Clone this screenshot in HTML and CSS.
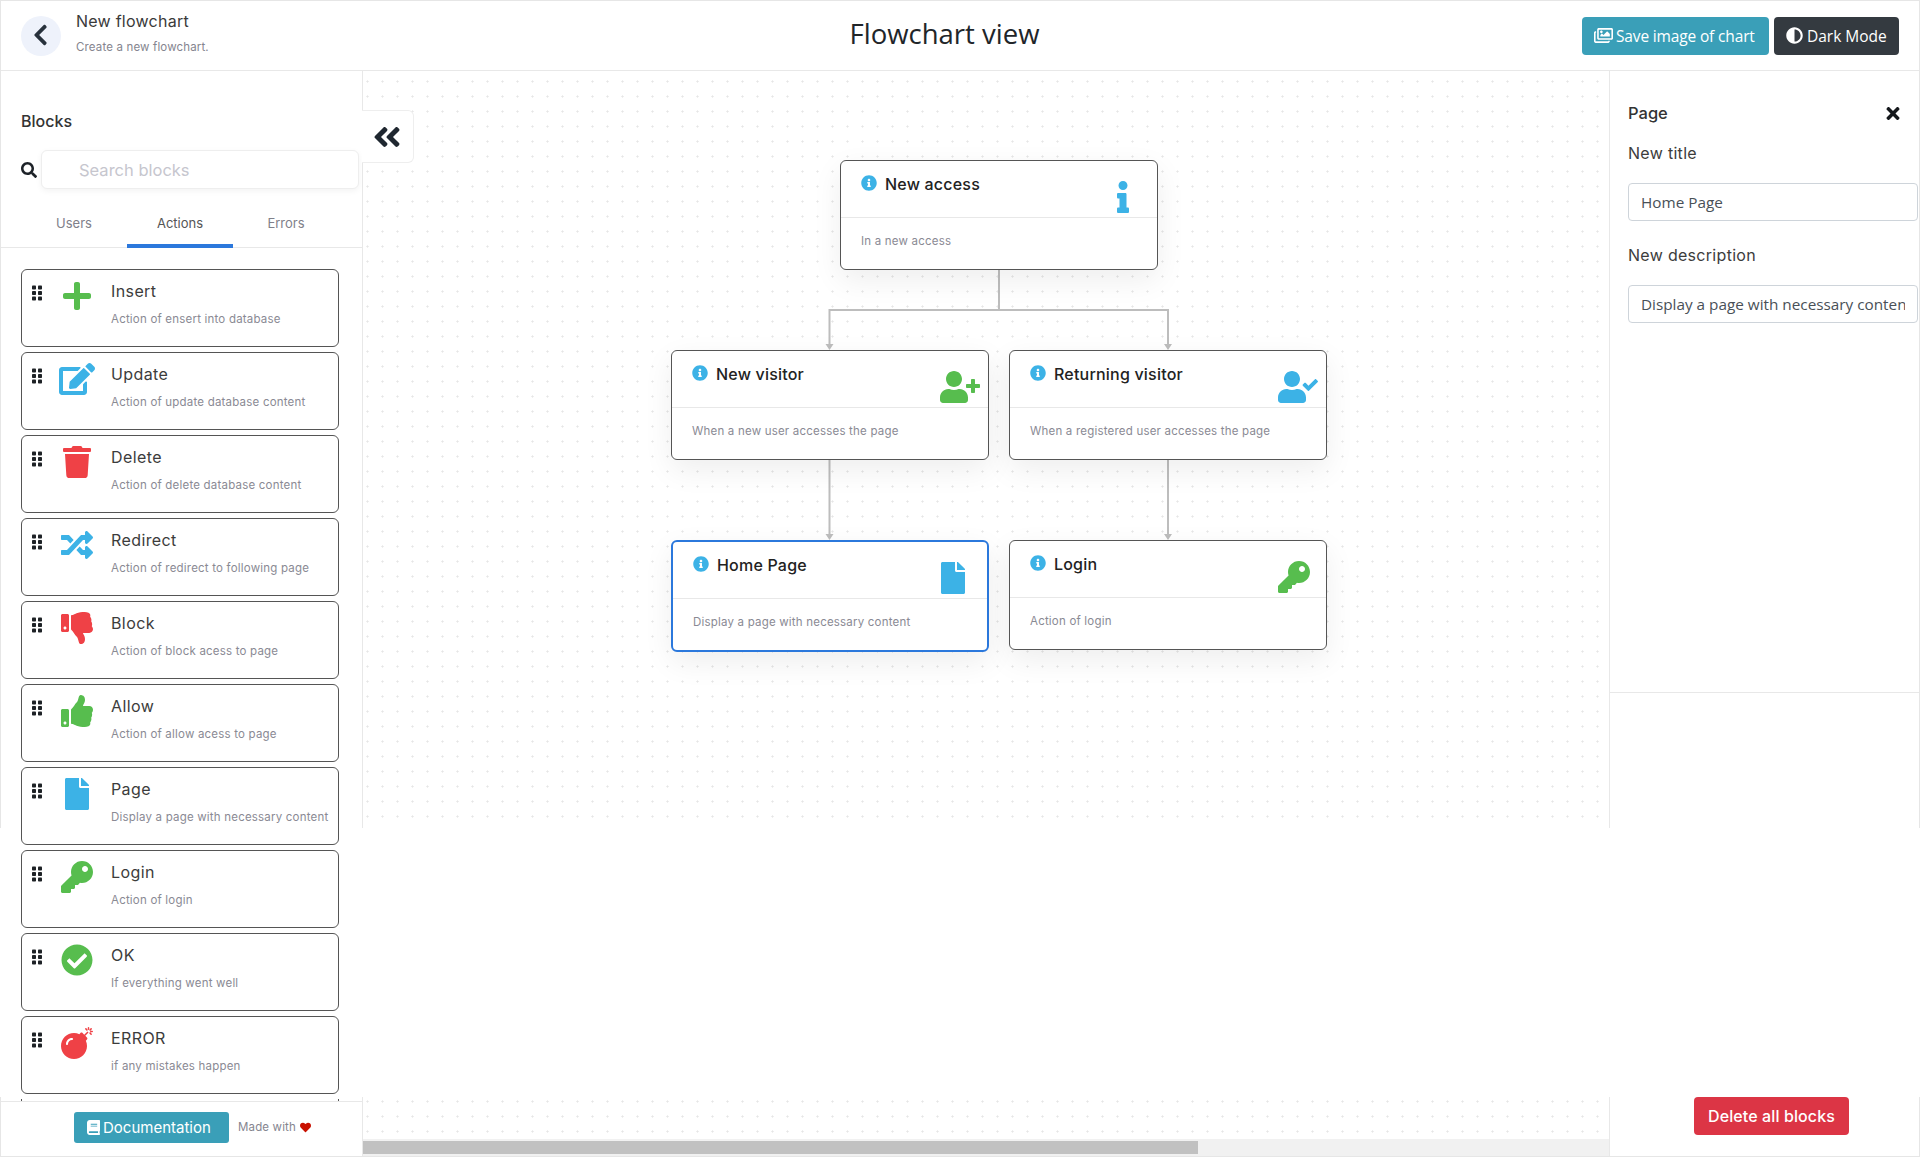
FILE: index.html
```html
<!DOCTYPE html>
<html lang="en">
<head>
<meta charset="utf-8">
<title>Flowchart view</title>
<link rel="stylesheet" href="styles.css">
</head>
<body>
<svg class="sprites" xmlns="http://www.w3.org/2000/svg">
<symbol id="i-plus" viewBox="0 0 448 512"><path d="M416 208H272V64c0-17.67-14.33-32-32-32h-32c-17.67 0-32 14.33-32 32v144H32c-17.67 0-32 14.33-32 32v32c0 17.67 14.33 32 32 32h144v144c0 17.67 14.33 32 32 32h32c17.67 0 32-14.33 32-32V304h144c17.67 0 32-14.33 32-32v-32c0-17.67-14.33-32-32-32z"/></symbol>
<symbol id="i-edit" viewBox="0 0 576 512"><path d="M402.6 83.2l90.2 90.2c3.8 3.8 3.8 10 0 13.8L274.4 405.6l-92.8 10.3c-12.4 1.4-22.9-9.1-21.5-21.5l10.3-92.8L388.8 83.2c3.8-3.8 10-3.8 13.8 0zm162-22.9l-48.8-48.8c-15.2-15.2-39.9-15.2-55.2 0l-35.4 35.4c-3.8 3.8-3.8 10 0 13.8l90.2 90.2c3.8 3.8 10 3.8 13.8 0l35.4-35.4c15.2-15.3 15.2-40 0-55.2zM384 346.2V448H64V128h229.8c3.2 0 6.2-1.3 8.5-3.5l40-40c7.6-7.6 2.2-20.5-8.5-20.5H48C21.5 64 0 85.5 0 112v352c0 26.5 21.5 48 48 48h352c26.5 0 48-21.5 48-48V306.2c0-10.7-12.9-16-20.5-8.5l-40 40c-2.2 2.3-3.5 5.3-3.5 8.5z"/></symbol>
<symbol id="i-trash" viewBox="0 0 448 512"><path d="M432 32H312l-9.4-18.7A24 24 0 0 0 281.1 0H166.8a23.72 23.72 0 0 0-21.4 13.3L136 32H16A16 16 0 0 0 0 48v32a16 16 0 0 0 16 16h416a16 16 0 0 0 16-16V48a16 16 0 0 0-16-16zM53.2 467a48 48 0 0 0 47.9 45h245.8a48 48 0 0 0 47.9-45L416 128H32z"/></symbol>
<symbol id="i-random" viewBox="0 0 512 512"><path d="M504.971 359.029c9.373 9.373 9.373 24.569 0 33.941l-80 79.984c-15.01 15.01-40.971 4.49-40.971-16.971V416h-58.785a12.004 12.004 0 0 1-8.773-3.812l-70.556-75.596 53.333-57.143L352 336h32v-39.981c0-21.438 25.943-31.998 40.971-16.971l80 79.981zM12 176h84l52.781 56.551 53.333-57.143-70.556-75.596A11.999 11.999 0 0 0 122.785 96H12c-6.627 0-12 5.373-12 12v56c0 6.627 5.373 12 12 12zm372 0v39.984c0 21.46 25.961 31.98 40.971 16.971l80-79.984c9.373-9.373 9.373-24.569 0-33.941l-80-79.981C409.943 24.021 384 34.582 384 56.019V96h-58.785a12.004 12.004 0 0 0-8.773 3.812L96 336H12c-6.627 0-12 5.373-12 12v56c0 6.627 5.373 12 12 12h110.785c3.326 0 6.503-1.381 8.773-3.812L352 176h32z"/></symbol>
<symbol id="i-down" viewBox="0 0 512 512"><path d="M0 56v240c0 13.255 10.745 24 24 24h80c13.255 0 24-10.745 24-24V56c0-13.255-10.745-24-24-24H24C10.745 32 0 42.745 0 56zm40 200c0-13.255 10.745-24 24-24s24 10.745 24 24-10.745 24-24 24-24-10.745-24-24zm272 256c-20.183 0-29.485-39.293-33.931-57.795-5.206-21.666-10.589-44.07-25.393-58.902-32.469-32.524-49.503-73.967-89.117-113.111a11.98 11.98 0 0 1-3.558-8.521V59.901c0-6.541 5.243-11.878 11.783-11.998 15.831-.29 36.694-9.079 52.651-16.178C256.189 17.598 295.709.017 343.995 0h2.844c42.777 0 93.363.413 113.774 29.737 8.392 12.057 10.446 27.034 6.148 44.632 16.312 17.053 25.063 48.863 16.382 74.757 17.544 23.432 19.143 56.132 9.308 79.469l.11.11c11.893 11.949 19.523 31.259 19.439 49.197-.156 30.352-26.157 58.098-59.553 58.098H350.723C358.03 364.34 384 388.132 384 430.548 384 504 336 512 312 512z"/></symbol>
<symbol id="i-up" viewBox="0 0 512 512"><path d="M104 224H24c-13.255 0-24 10.745-24 24v240c0 13.255 10.745 24 24 24h80c13.255 0 24-10.745 24-24V248c0-13.255-10.745-24-24-24zM64 472c-13.255 0-24-10.745-24-24s10.745-24 24-24 24 10.745 24 24-10.745 24-24 24zM384 81.452c0 42.416-25.97 66.208-33.277 94.548h101.723c33.397 0 59.397 27.746 59.553 58.098.084 17.938-7.546 37.249-19.439 49.197l-.11.11c9.836 23.337 8.237 56.037-9.308 79.469 8.681 25.895-.069 57.704-16.382 74.757 4.298 17.598 2.244 32.575-6.148 44.632C440.202 511.587 389.616 512 346.839 512l-2.845-.001c-48.287-.017-87.806-17.598-119.56-31.725-15.957-7.099-36.821-15.887-52.651-16.178-6.54-.12-11.783-5.457-11.783-11.998v-213.77c0-3.2 1.282-6.271 3.558-8.521 39.614-39.144 56.648-80.587 89.117-113.111 14.804-14.832 20.188-37.236 25.393-58.902C282.515 39.293 291.817 0 312 0c24 0 72 8 72 81.452z"/></symbol>
<symbol id="i-file" viewBox="0 0 384 512"><path d="M224 136V0H24C10.7 0 0 10.7 0 24v464c0 13.3 10.7 24 24 24h336c13.3 0 24-10.7 24-24V160H248c-13.2 0-24-10.8-24-24zm160-14.1v6.1H256V0h6.1c6.4 0 12.5 2.5 17 7l97.9 98c4.5 4.5 7 10.6 7 16.9z"/></symbol>
<symbol id="i-key" viewBox="0 0 512 512"><path d="M512 176.001C512 273.203 433.202 352 336 352c-11.22 0-22.19-1.062-32.827-3.069l-24.012 27.014A23.999 23.999 0 0 1 261.223 384H224v40c0 13.255-10.745 24-24 24h-40v40c0 13.255-10.745 24-24 24H24c-13.255 0-24-10.745-24-24v-78.059c0-6.365 2.529-12.47 7.029-16.971l161.802-161.802C163.108 213.814 160 195.271 160 176 160 78.798 238.797.001 335.999 0 433.488-.001 512 78.511 512 176.001zM336 128c0 26.51 21.49 48 48 48s48-21.49 48-48-21.49-48-48-48-48 21.49-48 48z"/></symbol>
<symbol id="i-check" viewBox="0 0 512 512"><path d="M504 256c0 136.967-111.033 248-248 248S8 392.967 8 256 119.033 8 256 8s248 111.033 248 248zM227.314 387.314l184-184c6.248-6.248 6.248-16.379 0-22.627l-22.627-22.627c-6.248-6.249-16.379-6.249-22.628 0L216 308.118l-70.059-70.059c-6.248-6.248-16.379-6.248-22.628 0l-22.627 22.627c-6.248 6.248-6.248 16.379 0 22.627l104 104c6.249 6.249 16.379 6.249 22.628.001z"/></symbol>
<symbol id="i-bomb" viewBox="0 0 512 512"><path d="M440.5 88.5l-52 52L415 167c9.4 9.4 9.4 24.6 0 33.9l-17.4 17.4c11.8 26.1 18.4 55.1 18.4 85.6 0 114.9-93.1 208-208 208S0 418.9 0 304 93.1 96 208 96c30.5 0 59.5 6.6 85.6 18.4L311 97c9.4-9.4 24.6-9.4 33.9 0l26.5 26.5 52-52 17.1 17zM500 60h-24c-6.6 0-12 5.4-12 12s5.4 12 12 12h24c6.6 0 12-5.4 12-12s-5.4-12-12-12zM440 0c-6.6 0-12 5.4-12 12v24c0 6.6 5.4 12 12 12s12-5.4 12-12V12c0-6.6-5.4-12-12-12zm33.9 55l17-17c4.7-4.7 4.7-12.3 0-17-4.7-4.7-12.3-4.7-17 0l-17 17c-4.7 4.7-4.7 12.3 0 17 4.8 4.7 12.4 4.7 17 0zm-67.8 0c4.7 4.7 12.3 4.7 17 0 4.7-4.7 4.7-12.3 0-17l-17-17c-4.7-4.7-12.3-4.7-17 0-4.7 4.7-4.7 12.3 0 17l17 17zm67.8 34c-4.7-4.7-12.3-4.7-17 0-4.7 4.7-4.7 12.3 0 17l17 17c4.7 4.7 12.3 4.7 17 0 4.7-4.7 4.7-12.3 0-17l-17-17zM112 272c0-35.3 28.7-64 64-64 8.8 0 16-7.2 16-16s-7.2-16-16-16c-52.9 0-96 43.1-96 96 0 8.8 7.2 16 16 16s16-7.2 16-16z"/></symbol>
<symbol id="i-info" viewBox="0 0 192 512"><path d="M20 424.229h20V279.771H20c-11.046 0-20-8.954-20-20V212c0-11.046 8.954-20 20-20h112c11.046 0 20 8.954 20 20v212.229h20c11.046 0 20 8.954 20 20V492c0 11.046-8.954 20-20 20H20c-11.046 0-20-8.954-20-20v-47.771c0-11.046 8.954-20 20-20zM96 0C56.235 0 24 32.235 24 72s32.235 72 72 72 72-32.235 72-72S135.764 0 96 0z"/></symbol>
<symbol id="i-info-c" viewBox="0 0 512 512"><path d="M256 8C119.043 8 8 119.083 8 256c0 136.997 111.043 248 248 248s248-111.003 248-248C504 119.083 392.957 8 256 8zm0 110c23.196 0 42 18.804 42 42s-18.804 42-42 42-42-18.804-42-42 18.804-42 42-42zm56 254c0 6.627-5.373 12-12 12h-88c-6.627 0-12-5.373-12-12v-24c0-6.627 5.373-12 12-12h12v-64h-12c-6.627 0-12-5.373-12-12v-24c0-6.627 5.373-12 12-12h64c6.627 0 12 5.373 12 12v100h12c6.627 0 12 5.373 12 12v24z"/></symbol>
<symbol id="i-uplus" viewBox="0 0 640 512"><path d="M624 208h-64v-64c0-8.8-7.2-16-16-16h-32c-8.8 0-16 7.2-16 16v64h-64c-8.8 0-16 7.2-16 16v32c0 8.8 7.2 16 16 16h64v64c0 8.8 7.2 16 16 16h32c8.8 0 16-7.2 16-16v-64h64c8.8 0 16-7.2 16-16v-32c0-8.8-7.2-16-16-16zm-400 48c70.7 0 128-57.3 128-128S294.7 0 224 0 96 57.3 96 128s57.3 128 128 128zm89.6 32h-16.7c-22.2 10.2-46.9 16-72.9 16s-50.6-5.8-72.9-16h-16.7C60.2 288 0 348.2 0 422.4V464c0 26.5 21.5 48 48 48h352c26.5 0 48-21.5 48-48v-41.6c0-74.2-60.2-134.4-134.4-134.4z"/></symbol>
<symbol id="i-ucheck" viewBox="0 0 640 512"><path d="M224 256c70.7 0 128-57.3 128-128S294.7 0 224 0 96 57.3 96 128s57.3 128 128 128zm89.6 32h-16.7c-22.2 10.2-46.9 16-72.9 16s-50.6-5.8-72.9-16h-16.7C60.2 288 0 348.2 0 422.4V464c0 26.5 21.5 48 48 48h352c26.5 0 48-21.5 48-48v-41.6c0-74.2-60.2-134.4-134.4-134.4zm323-128.4l-27.8-28.1c-4.6-4.7-12.1-4.7-16.8-.1l-104.8 104-45.5-45.8c-4.6-4.7-12.1-4.7-16.8-.1l-28.1 27.9c-4.7 4.6-4.7 12.1-.1 16.8l81.7 82.3c4.6 4.7 12.1 4.7 16.8.1l141.3-140.2c4.6-4.7 4.7-12.2.1-16.8z"/></symbol>
<symbol id="i-back" viewBox="0 0 320 512"><path d="M34.52 239.03L228.87 44.69c9.37-9.37 24.57-9.37 33.94 0l22.67 22.67c9.36 9.36 9.37 24.52.04 33.9L131.49 256l154.02 154.75c9.34 9.38 9.32 24.54-.04 33.9l-22.67 22.67c-9.37 9.37-24.57 9.37-33.94 0L34.52 272.97c-9.37-9.37-9.37-24.57 0-33.94z"/></symbol>
<symbol id="i-dbl" viewBox="0 0 448 512"><path d="M223.7 239l136-136c9.4-9.4 24.6-9.4 33.9 0l22.6 22.6c9.4 9.4 9.4 24.6 0 33.9L319.9 256l96.4 96.4c9.4 9.4 9.4 24.6 0 33.9L393.7 409c-9.4 9.4-24.6 9.4-33.9 0l-136-136c-9.5-9.4-9.5-24.6-.1-34zm-192 34l136 136c9.4 9.4 24.6 9.4 33.9 0l22.6-22.6c9.4-9.4 9.4-24.6 0-33.9L127.9 256l96.4-96.4c9.4-9.4 9.4-24.6 0-33.9L201.7 103c-9.4-9.4-24.6-9.4-33.9 0l-136 136c-9.5 9.4-9.5 24.6-.1 34z"/></symbol>
<symbol id="i-search" viewBox="0 0 512 512"><path d="M505 442.7L405.3 343c-4.5-4.5-10.6-7-17-7H372c27.6-35.3 44-79.7 44-128C416 93.1 322.9 0 208 0S0 93.1 0 208s93.1 208 208 208c48.3 0 92.7-16.4 128-44v16.3c0 6.4 2.5 12.5 7 17l99.7 99.7c9.4 9.4 24.6 9.4 33.9 0l28.3-28.3c9.4-9.4 9.4-24.6.1-34zM208 336c-70.7 0-128-57.2-128-128 0-70.7 57.2-128 128-128 70.7 0 128 57.2 128 128 0 70.7-57.2 128-128 128z"/></symbol>
<symbol id="i-times" viewBox="0 0 352 512"><path d="M242.72 256l100.07-100.07c12.28-12.28 12.28-32.19 0-44.48l-22.24-22.24c-12.28-12.28-32.19-12.28-44.48 0L176 189.28 75.93 89.21c-12.28-12.28-32.19-12.28-44.48 0L9.21 111.45c-12.28 12.28-12.28 32.19 0 44.48L109.28 256 9.21 356.07c-12.28 12.28-12.28 32.19 0 44.48l22.24 22.24c12.28 12.28 32.2 12.28 44.48 0L176 322.72l100.07 100.07c12.28 12.28 32.2 12.28 44.48 0l22.24-22.24c12.28-12.28 12.28-32.19 0-44.48L242.72 256z"/></symbol>
<symbol id="i-images" viewBox="0 0 576 512"><path d="M480 416v16c0 26.51-21.49 48-48 48H48c-26.51 0-48-21.49-48-48V176c0-26.51 21.49-48 48-48h16v48H54a6 6 0 0 0-6 6v244a6 6 0 0 0 6 6h372a6 6 0 0 0 6-6v-10h48zm42-336H150a6 6 0 0 0-6 6v244a6 6 0 0 0 6 6h372a6 6 0 0 0 6-6V86a6 6 0 0 0-6-6zm6-48c26.51 0 48 21.49 48 48v256c0 26.51-21.49 48-48 48H144c-26.51 0-48-21.49-48-48V80c0-26.51 21.49-48 48-48h384zM264 144c0 22.091-17.909 40-40 40s-40-17.909-40-40 17.909-40 40-40 40 17.909 40 40zm-72 96l39.515-39.515c4.686-4.686 12.284-4.686 16.971 0L288 240l103.515-103.515c4.686-4.686 12.284-4.686 16.971 0L480 208v80H192v-48z"/></symbol>
<symbol id="i-adjust" viewBox="0 0 512 512"><path d="M8 256c0 136.966 111.033 248 248 248s248-111.034 248-248S392.966 8 256 8 8 119.033 8 256zm248 184V72c101.705 0 184 82.311 184 184 0 101.705-82.311 184-184 184z"/></symbol>
<symbol id="i-book" viewBox="0 0 448 512"><path d="M448 360V24c0-13.3-10.7-24-24-24H96C43 0 0 43 0 96v320c0 53 43 96 96 96h328c13.3 0 24-10.7 24-24v-16c0-7.5-3.5-14.3-8.9-18.7-4.2-15.4-4.2-59.3 0-74.7 5.4-4.3 8.9-11.1 8.9-18.6zM128 134c0-3.3 2.7-6 6-6h212c3.3 0 6 2.7 6 6v20c0 3.3-2.7 6-6 6H134c-3.3 0-6-2.7-6-6v-20zm0 64c0-3.3 2.7-6 6-6h212c3.3 0 6 2.7 6 6v20c0 3.3-2.7 6-6 6H134c-3.3 0-6-2.7-6-6v-20zm253.4 250H96c-17.7 0-32-14.3-32-32 0-17.6 14.4-32 32-32h285.4c-1.9 17.1-1.9 46.9 0 64z"/></symbol>
<symbol id="i-heart" viewBox="0 0 512 512"><path d="M462.3 62.6C407.5 15.9 326 24.3 275.7 76.2L256 96.5l-19.7-20.3C186.1 24.3 104.5 15.9 49.7 62.6c-62.8 53.6-66.1 149.8-9.9 207.9l193.5 199.8c12.5 12.9 32.8 12.9 45.3 0l193.5-199.8c56.3-58.1 53-154.3-9.8-207.9z"/></symbol>
<symbol id="i-grip" viewBox="0 0 10 15"><rect width="4" height="4" rx=".8"/><rect x="6" width="4" height="4" rx=".8"/><rect y="5.5" width="4" height="4" rx=".8"/><rect x="6" y="5.5" width="4" height="4" rx=".8"/><rect y="11" width="4" height="4" rx=".8"/><rect x="6" y="11" width="4" height="4" rx=".8"/></symbol>
</svg>

<div class="app">
  <header class="topbar">
    <div class="brand">
      <a class="back"><svg class="ic-back"><use href="#i-back"/></svg></a>
      <div class="brand-text">
        <div class="brand-title">New flowchart</div>
        <div class="brand-sub">Create a new flowchart.</div>
      </div>
    </div>
    <h1 class="view-title">Flowchart view</h1>
    <div class="actions">
      <button class="btn btn-info"><svg class="ic-btn-w"><use href="#i-images"/></svg>Save image of chart</button>
      <button class="btn btn-dark"><svg class="ic-btn"><use href="#i-adjust"/></svg>Dark Mode</button>
    </div>
  </header>

  <main class="workspace">
    <aside class="left">
      <h2 class="left-title">Blocks</h2>
      <div class="search">
        <svg class="ic-search"><use href="#i-search"/></svg>
        <input class="search-input" placeholder="Search blocks">
      </div>
      <nav class="tabs">
        <span class="tab">Users</span>
        <span class="tab tab-on">Actions</span>
        <span class="tab">Errors</span>
      </nav>
      <div class="blocks">
        <article class="block"><svg class="grip"><use href="#i-grip"/></svg><div class="block-icon"><svg class="big green w28"><use href="#i-plus"/></svg></div><div><div class="block-title">Insert</div><div class="block-sub">Action of ensert into database</div></div></article>
        <article class="block"><svg class="grip"><use href="#i-grip"/></svg><div class="block-icon"><svg class="big blue w36"><use href="#i-edit"/></svg></div><div><div class="block-title">Update</div><div class="block-sub">Action of update database content</div></div></article>
        <article class="block"><svg class="grip"><use href="#i-grip"/></svg><div class="block-icon"><svg class="big red w28"><use href="#i-trash"/></svg></div><div><div class="block-title">Delete</div><div class="block-sub">Action of delete database content</div></div></article>
        <article class="block"><svg class="grip"><use href="#i-grip"/></svg><div class="block-icon"><svg class="big blue w32"><use href="#i-random"/></svg></div><div><div class="block-title">Redirect</div><div class="block-sub">Action of redirect to following page</div></div></article>
        <article class="block"><svg class="grip"><use href="#i-grip"/></svg><div class="block-icon"><svg class="big red w32"><use href="#i-down"/></svg></div><div><div class="block-title">Block</div><div class="block-sub">Action of block acess to page</div></div></article>
        <article class="block"><svg class="grip"><use href="#i-grip"/></svg><div class="block-icon"><svg class="big green w32"><use href="#i-up"/></svg></div><div><div class="block-title">Allow</div><div class="block-sub">Action of allow acess to page</div></div></article>
        <article class="block"><svg class="grip"><use href="#i-grip"/></svg><div class="block-icon"><svg class="big blue w24"><use href="#i-file"/></svg></div><div><div class="block-title">Page</div><div class="block-sub">Display a page with necessary content</div></div></article>
        <article class="block"><svg class="grip"><use href="#i-grip"/></svg><div class="block-icon"><svg class="big green w32"><use href="#i-key"/></svg></div><div><div class="block-title">Login</div><div class="block-sub">Action of login</div></div></article>
        <article class="block"><svg class="grip"><use href="#i-grip"/></svg><div class="block-icon"><svg class="big green w32"><use href="#i-check"/></svg></div><div><div class="block-title">OK</div><div class="block-sub">If everything went well</div></div></article>
        <article class="block"><svg class="grip"><use href="#i-grip"/></svg><div class="block-icon"><svg class="big red w32"><use href="#i-bomb"/></svg></div><div><div class="block-title">ERROR</div><div class="block-sub">if any mistakes happen</div></div></article>
        <div class="blocks-end"></div>
      </div>
      <footer class="left-foot">
        <button class="btn-doc"><svg class="ic-book"><use href="#i-book"/></svg>Documentation</button>
        <span class="made">Made with <svg class="ic-heart"><use href="#i-heart"/></svg></span>
      </footer>
    </aside>

    <section class="canvas">
      <div class="stage">
        <button class="collapse"><svg class="ic-dbl"><use href="#i-dbl"/></svg></button>
        <svg class="wires" xmlns="http://www.w3.org/2000/svg">
          <path d="M636 199V239M466.5 274V239H805V274M466.5 389V464M805 389V464"/>
          <polygon points="462.5,273 470.5,273 466.5,279"/>
          <polygon points="801,273 809,273 805,279"/>
          <polygon points="462.5,463 470.5,463 466.5,469"/>
          <polygon points="801,463 809,463 805,469"/>
        </svg>
        <article class="node n1">
          <div class="node-head"><svg class="ic-info"><use href="#i-info-c"/></svg><span class="node-title">New access</span><svg class="node-icon blue w12"><use href="#i-info"/></svg></div>
          <div class="node-body">In a new access</div>
        </article>
        <article class="node n2">
          <div class="node-head"><svg class="ic-info"><use href="#i-info-c"/></svg><span class="node-title">New visitor</span><svg class="node-icon green w40"><use href="#i-uplus"/></svg></div>
          <div class="node-body">When a new user accesses the page</div>
        </article>
        <article class="node n3">
          <div class="node-head"><svg class="ic-info"><use href="#i-info-c"/></svg><span class="node-title">Returning visitor</span><svg class="node-icon blue w40"><use href="#i-ucheck"/></svg></div>
          <div class="node-body">When a registered user accesses the page</div>
        </article>
        <article class="node n4 node-active">
          <div class="node-head"><svg class="ic-info"><use href="#i-info-c"/></svg><span class="node-title">Home Page</span><svg class="node-icon blue w24"><use href="#i-file"/></svg></div>
          <div class="node-body">Display a page with necessary content</div>
        </article>
        <article class="node n5">
          <div class="node-head"><svg class="ic-info"><use href="#i-info-c"/></svg><span class="node-title">Login</span><svg class="node-icon green w32"><use href="#i-key"/></svg></div>
          <div class="node-body">Action of login</div>
        </article>
      </div>
      <div class="hscroll"><div class="hthumb"></div></div>
    </section>

    <aside class="right">
      <div class="props">
        <div class="props-head"><h2 class="props-title">Page</h2><svg class="ic-times"><use href="#i-times"/></svg></div>
        <label class="field-label">New title</label>
        <input class="field" value="Home Page">
        <label class="field-label field-label-2">New description</label>
        <input class="field" value="Display a page with necessary content">
      </div>
      <div class="right-foot"><button class="btn-danger">Delete all blocks</button></div>
    </aside>
  </main>
  <div class="unpainted"></div>
</div>
</body>
</html>
```

FILE: styles.css
```css
* { box-sizing: border-box; }
html, body { margin: 0; padding: 0; background: #fff; }
body { font-family: "Inter", "Liberation Sans", sans-serif; color: #333; overflow: hidden; }
.sprites { position: absolute; width: 0; height: 0; }
button { font: inherit; cursor: pointer; }

.app { position: relative; width: 1920px; height: 1157px; border: 1px solid #e6e6e6; display: flex; flex-direction: column; }

.topbar { height: 70px; flex: none; display: flex; align-items: center; justify-content: space-between; padding: 0 20px; border-bottom: 1px solid #e8e8e8; }
.brand { width: 286px; display: flex; align-items: center; gap: 15px; }
.back { width: 40px; height: 40px; border-radius: 50%; background: #eef2fb; display: flex; align-items: center; justify-content: center; }
.ic-back { width: 15px; height: 24px; fill: #27313c; margin: -2px 1px 0 0; }
.brand-title { font-size: 16px; line-height: 20px; color: #3a3a3a; letter-spacing: .25px; margin-top: -6px; }
.brand-sub { font-size: 11.5px; line-height: 16px; color: #85858f; margin-top: 8px; letter-spacing: .15px; }
.view-title { margin: -4px 0 0; font: 500 27.5px/38px "Open Sans", sans-serif; color: #212529; }
.actions { display: flex; gap: 5px; }
.btn { height: 38px; border: 0; border-radius: 4px; color: #fff; font: 400 15.5px/38px "Open Sans", sans-serif; display: flex; align-items: center; padding: 0 12px; white-space: nowrap; }
.btn-info { background: #3a9fb8; width: 187px; letter-spacing: -.15px; }
.btn-dark { background: #343a40; width: 125px; }
.ic-btn-w { width: 19px; height: 17px; fill: #fff; margin-right: 3px; flex: none; }
.ic-btn { width: 17px; height: 17px; fill: #fff; margin-right: 4px; flex: none; }

.workspace { flex: 1; display: flex; min-height: 0; }

.left { width: 362px; flex: none; display: flex; flex-direction: column; border-right: 1px solid #e8e8e8; }
.left-title { margin: 40px 0 0 20px; font-size: 16px; line-height: 20px; font-weight: 500; color: #333; }
.search { display: flex; align-items: center; margin: 19px 3px 0 20px; gap: 4px; }
.ic-search { width: 16px; height: 16px; fill: #1d2228; flex: none; }
.search-input { flex: 1; min-width: 0; height: 39px; border: 1px solid #eee; border-radius: 6px; background: #fff; padding: 0 0 0 37px; box-shadow: 0 2px 6px rgba(0,0,0,.05); font: 400 16.5px "Inter", sans-serif; outline: 0; }
.search-input::placeholder { color: #c6c6ce; }
.tabs { display: flex; margin-top: 14px; padding: 0 20px; border-bottom: 1px solid #e8e8e8; height: 45px; }
.tab { width: 106px; height: 45px; text-align: center; font-size: 13px; line-height: 40px; color: #80808a; }
.tab-on { color: #555; border-bottom: 4px solid #2b78dc; }

.blocks { position: relative; z-index: 2; flex: 1; min-height: 0; overflow: hidden; padding: 21px 0 0 20px; display: flex; flex-direction: column; gap: 5px; }
.block { flex: none; width: 318px; height: 78px; border: 1px solid #555; border-radius: 6px; background: #fff; display: flex; padding: 0 0 0 10px; }
.grip { width: 10px; height: 16px; margin-top: 15px; fill: #1e2226; flex: none; }
.block-icon { width: 40px; margin: 10px 14px 0 15px; flex: none; display: flex; justify-content: center; }
.block-title { font-size: 16px; line-height: 22px; margin-top: 10px; color: #3c3c3c; letter-spacing: .4px; white-space: nowrap; }
.block-sub { font-size: 11.5px; line-height: 18px; margin-top: 8px; color: #8a8a94; white-space: nowrap; letter-spacing: .2px; }
.blocks-end { flex: none; width: 318px; height: 2px; border-left: 1px solid #555; border-right: 1px solid #555; }

.big { height: 32px; flex: none; }
.w12 { width: 12px; } .w24 { width: 24px; } .w28 { width: 28px; } .w32 { width: 32px; } .w36 { width: 36px; } .w40 { width: 40px; }
.green { fill: #57bd4e; } .blue { fill: #3cb2e6; } .red { fill: #ef4146; }

.left-foot { position: relative; z-index: 2; flex: none; height: 55px; border-top: 1px solid #e8e8e8; display: flex; align-items: flex-start; padding: 10px 0 0 73px; gap: 9px; background: #fff; }
.btn-doc { width: 155px; height: 31px; border: 0; border-radius: 3px; background: #3a9fb8; color: #fff; font-size: 15px; font-weight: 400; display: flex; align-items: center; padding: 0 0 0 13px; white-space: nowrap; }
.ic-book { width: 13px; height: 15px; fill: #fff; margin-right: 3px; flex: none; }
.made { font-size: 11.5px; line-height: 31px; color: #85858f; display: flex; align-items: center; gap: 4px; white-space: nowrap; letter-spacing: .15px; }
.ic-heart { width: 11px; height: 11px; fill: #c81000; }

.canvas { flex: 1; min-width: 0; display: flex; flex-direction: column; }
.stage { position: relative; flex: 1; min-height: 0; background-color: #fff; background-image: radial-gradient(circle at center, #e6e6e6 0, #e6e6e6 .9px, transparent 1.2px); background-size: 15px 15px; background-position: -3px 3px; }
.collapse { position: absolute; left: -1px; top: 39px; width: 52px; height: 53px; background: #fff; border: 1px solid #eee; border-left: 0; border-radius: 0 6px 6px 0; padding: 0 2px 0 0; display: flex; align-items: center; justify-content: center; z-index: 1; }
.ic-dbl { width: 28px; height: 32px; fill: #1f2730; }
.wires { position: absolute; inset: 0; width: 100%; height: 100%; }
.wires path { fill: none; stroke: #bdbdbd; stroke-width: 2; }
.wires polygon { fill: #bdbdbd; }
.hscroll { height: 17px; flex: none; background: #f1f1f1; padding: 2px 0; }
.hthumb { width: 835px; height: 13px; background: #c1c1c1; }

.node { position: absolute; width: 318px; height: 110px; background: #fff; border: 1px solid #555; border-radius: 6px; box-shadow: 0 10px 30px rgba(0,0,0,.07); }
.n1 { left: 477px; top: 89px; }
.n2 { left: 308px; top: 279px; }
.n3 { left: 646px; top: 279px; }
.n4 { left: 308px; top: 469px; }
.n5 { left: 646px; top: 469px; }
.node-active { height: 112px; border: 2px solid #2b78dc; }
.node-head { position: relative; height: 57px; border-bottom: 1px solid #e8e8e8; display: flex; align-items: flex-start; padding: 13px 0 0 20px; }
.ic-info { width: 16px; height: 16px; fill: #3cb2e6; margin-right: 8px; flex: none; margin-top: 1px; }
.node-title { font-size: 16px; line-height: 22px; font-weight: 500; color: #222; white-space: nowrap; letter-spacing: .2px; margin-top: -1px; }
.node-icon { position: absolute; left: 268px; top: 20px; height: 32px; }
.n1 .node-icon { left: 276px; }
.node-body { padding: 14px 0 0 20px; font-size: 11.5px; line-height: 18px; color: #8a8a94; white-space: nowrap; letter-spacing: .2px; }

.right { width: 310px; flex: none; display: flex; flex-direction: column; border-left: 1px solid #e8e8e8; }
.props { height: 622px; flex: none; border-bottom: 1px solid #e8e8e8; padding: 30px 0 0 18px; }
.props-head { display: flex; align-items: center; justify-content: space-between; padding-right: 19px; height: 24px; }
.props-title { margin: 0; font-size: 16.5px; line-height: 24px; font-weight: 500; color: #333; }
.ic-times { width: 14px; height: 19px; fill: #15181c; }
.field-label { display: block; font-size: 16px; line-height: 24px; color: #3c3c3c; margin-top: 16px; letter-spacing: .3px; }
.field-label-2 { margin-top: 22px; }
.field { display: block; width: 290px; height: 38px; margin-top: 18px; border: 1px solid #ced4da; border-radius: 4px; padding: 0 12px; font: 400 15.3px "Open Sans", sans-serif; color: #495057; background: #fff; outline: 0; }
.right-foot { flex: 1; display: flex; align-items: flex-end; padding: 0 0 21px 84px; }
.btn-danger { width: 155px; height: 38px; border: 0; border-radius: 4px; background: #dc3545; color: #fff; font-size: 16px; font-weight: 500; letter-spacing: .1px; padding: 0; white-space: nowrap; }

.unpainted { position: absolute; left: -1px; right: -1px; top: 827px; height: 269px; background: #fff; z-index: 1; }
```
